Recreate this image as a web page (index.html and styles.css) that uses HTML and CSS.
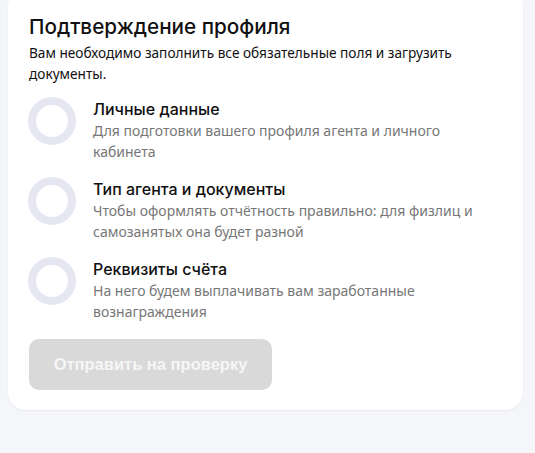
FILE: index.html
```html
<!DOCTYPE html>
<html lang="ru">
<head>
<meta charset="utf-8">
<link rel="stylesheet" href="styles.css">
</head>
<body>
<div class="card">
  <h1 class="title">Подтверждение профиля</h1>
  <p class="lead">Вам необходимо заполнить все обязательные поля и загрузить документы.</p>
  <ul class="steps">
    <li class="step">
      <span class="ring"></span>
      <div class="step-text">
        <div class="step-title">Личные данные</div>
        <div class="step-desc">Для подготовки вашего профиля агента и личного кабинета</div>
      </div>
    </li>
    <li class="step">
      <span class="ring"></span>
      <div class="step-text">
        <div class="step-title">Тип агента и документы</div>
        <div class="step-desc">Чтобы оформлять отчётность правильно: для физлиц и самозанятых она будет разной</div>
      </div>
    </li>
    <li class="step">
      <span class="ring"></span>
      <div class="step-text">
        <div class="step-title">Реквизиты счёта</div>
        <div class="step-desc">На него будем выплачивать вам заработанные вознаграждения</div>
      </div>
    </li>
  </ul>
  <button class="submit" disabled>Отправить на проверку</button>
</div>
</body>
</html>
```
FILE: styles.css
```css
* { box-sizing: border-box; }
html, body { margin: 0; padding: 0; }
body {
  background: #f5f6fa;
  font-family: "Noto Sans", "Open Sans", sans-serif;
  color: #111;
  width: 535px;
  height: 453px;
  overflow: hidden;
}
.card {
  margin: -12px 12px 0 8px;
  background: #fff;
  border-radius: 18px;
  box-shadow: 0 1px 2px rgba(0,0,0,0.06);
  padding: 26px 20px 20px 21px;
}
.title {
  margin: 0;
  font-family: "Inter", sans-serif;
  font-weight: 500;
  font-size: 20.7px;
  line-height: 26px;
  color: #111;
}
.lead {
  margin: 2px 0 0;
  font-size: 13.65px;
  line-height: 21px;
  color: #111;
}
.steps {
  list-style: none;
  margin: 13px 0 0;
  padding: 0;
  display: flex;
  flex-direction: column;
  gap: 16px;
}
.step {
  display: flex;
  gap: 17px;
  align-items: flex-start;
}
.ring {
  flex: none;
  width: 48px;
  height: 48px;
  margin-left: -1px;
  border-radius: 50%;
  border: 8px solid #e6e7f2;
}
.step-text {
  flex: 1;
  padding-top: 1px;
  margin-bottom: -1px;
}
.step-title {
  font-family: "Inter", sans-serif;
  font-weight: 500;
  font-size: 16px;
  line-height: 22px;
  color: #111;
}
.step-desc {
  font-size: 14px;
  line-height: 21px;
  color: #777;
  padding-right: 20px;
}
.submit {
  margin-top: 18px;
  width: 243px;
  height: 51px;
  border: none;
  border-radius: 10px;
  background: #d9d9d9;
  color: #f6f6f6;
  font-family: "Liberation Sans", Arial, sans-serif;
  font-weight: 700;
  font-size: 16.5px;
  padding: 0;
}
```
